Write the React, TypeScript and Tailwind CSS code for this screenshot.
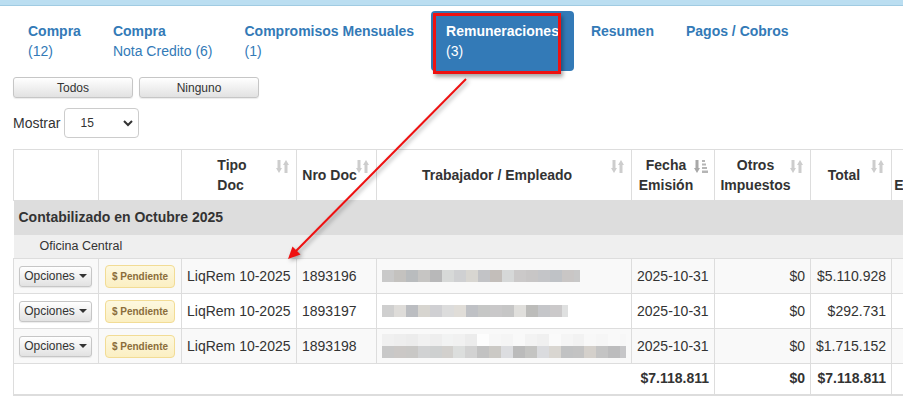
import React from 'react';

const tabs = [
  { title: 'Compra', sub: '(12)' },
  { title: 'Compra', sub: 'Nota Credito (6)' },
  { title: 'Compromisos Mensuales', sub: '(1)' },
  { title: 'Remuneraciones', sub: '(3)', active: true },
  { title: 'Resumen', sub: '' },
  { title: 'Pagos / Cobros', sub: '' },
];

// pixelated (blurred) names
const blur1 = ['#c9c9c9', '#c4c2bf', '#b9bcbe', '#c6c5c3', '#b8b8b9', '#d7d9d8', '#cfd0d2', '#d8d6d1', '#c2c3c6', '#c3beba', '#d6d8d8', '#cbc9c9', '#c8c6c6', '#c4c5c8', '#bfc2c6', '#c9c6c5', '#c8c8c8'];
const blur2 = ['#cfcfcf', '#dedcd9', '#bbbdc1', '#d7d5d0', '#d0d0d3', '#dcdcdc', '#e0ddd8', '#bfc1c5', '#c6c7c6', '#c9c8c9', '#c6c6c6', '#e0dfdc', '#bcbcba', '#c5c6c9', '#cbc9ca', '#dfe0e0'];
const blur3a = ['#f0f0f0', '#eeeeee', '#ececec', '#f1f1f1', '#eeeeee', '#f2f3f3', '#f1f1f1', '#ececec', '#fdfdfd', '#f7f7f7', '#f5f5f5', '#f9f9f9', '#f3f3f3', '#f0f0f0', '#fafafa', '#f5f5f5', '#f2f2f2', '#f8f8f8', '#f6f6f6', '#f9f9f9', '#f7f7f7'];
const blur3b = ['#c8c8c8', '#cbc8c6', '#c9c8c6', '#d1d2d3', '#ced0d0', '#d2d0cd', '#dcdedd', '#d2d2d2', '#c2c2c2', '#cbc9c5', '#dcdde0', '#bbbbbb', '#c4c4c2', '#dadbde', '#d9d6d1', '#c1c2c3', '#c3c3c3', '#d4d0cb', '#c4c4c4', '#bcbcbd', '#c6c6c8'];

const rows = [
  { nro: '1893196', total: '$5.110.928', blur: [blur1], striped: true },
  { nro: '1893197', total: '$292.731', blur: [blur2], striped: false },
  { nro: '1893198', total: '$1.715.152', blur: [blur3a, blur3b], striped: true },
];

function SortIcon({ active }: { active?: boolean }) {
  if (active) {
    return (
      <svg width="14" height="13" viewBox="0 0 14 13" className="absolute top-[10px] right-[6px]">
        <rect x="1.5" y="0" width="3" height="8" fill="#a8a8a8" />
        <polygon points="0,8 6,8 3,13" fill="#a8a8a8" />
        <rect x="8" y="0" width="3" height="2" fill="#b5b5b5" />
        <rect x="8" y="3.5" width="4" height="2" fill="#b5b5b5" />
        <rect x="8" y="7" width="5" height="2" fill="#b5b5b5" />
        <rect x="8" y="10.5" width="6" height="2.5" fill="#b5b5b5" />
      </svg>
    );
  }
  return (
    <svg width="13" height="13" viewBox="0 0 13 13" className="absolute top-[10px] right-[7px]">
      <rect x="1.5" y="0" width="3" height="8" fill="#cdcdcd" />
      <polygon points="0,8 6,8 3,13" fill="#cdcdcd" />
      <polygon points="7,5 13,5 10,0" fill="#cdcdcd" />
      <rect x="8.5" y="5" width="3" height="8" fill="#cdcdcd" />
    </svg>
  );
}

function Blocks({ colors }: { colors: string[] }) {
  return (
    <div className="flex h-[12px]">
      {colors.map((c, i) => (
        <div
          key={i}
          className={i === colors.length - 1 ? 'h-full w-[6px]' : 'h-full w-[12px]'}
          style={{ backgroundColor: c }}
        />
      ))}
    </div>
  );
}

const th = 'relative border border-[#ddd] pl-[5px] pr-[19px] py-[5px] text-center align-middle font-bold leading-5';
const td = 'border border-[#ddd] px-[5px] align-middle';

export default function App() {
  return (
    <div className="relative w-[903px] h-[414px] overflow-hidden bg-white font-['Liberation_Sans',Arial,sans-serif] text-[14px] text-[#333]">
      <div className="h-[6px] bg-[#bbdef1] border-b border-[#a0cbe2]" />

      <div className="pl-[13px] pt-[5px]">
        {/* Tabs */}
        <ul className="flex gap-[2px]">
          {tabs.map((t, i) => (
            <li
              key={i}
              className={
                t.active
                  ? 'px-[15px] py-[10px] leading-5 rounded bg-[#337ab7] text-white'
                  : 'px-[15px] py-[10px] leading-5 rounded text-[#337ab7]'
              }
            >
              <div className="font-bold whitespace-nowrap">{t.title}</div>
              <div className="whitespace-nowrap h-5">{t.sub}</div>
            </li>
          ))}
        </ul>

        <div className="flex gap-[6px] mt-[6px]">
          <button className="w-[120px] h-[21px] rounded-[3px] border border-[#c6c6c6] bg-gradient-to-b from-white to-[#e2e2e2] text-[12px] leading-none text-[#333] shadow-[0_1px_1px_rgba(0,0,0,0.08)]">
            Todos
          </button>
          <button className="w-[120px] h-[21px] rounded-[3px] border border-[#c6c6c6] bg-gradient-to-b from-white to-[#e2e2e2] text-[12px] leading-none text-[#333] shadow-[0_1px_1px_rgba(0,0,0,0.08)]">
            Ninguno
          </button>
        </div>

        <div className="flex items-center gap-[4px] mt-[10px]">
          <span>Mostrar</span>
          <div className="relative w-[75px] h-[30px]">
            <select className="w-full h-full appearance-none rounded border border-[#ccc] bg-white pl-[15px] text-[12px] text-[#333] outline-none">
              <option>15</option>
            </select>
            <svg width="10" height="7" viewBox="0 0 10 7" className="absolute right-[6px] top-[12px] pointer-events-none">
              <polyline points="1,1 5,5 9,1" fill="none" stroke="#333" strokeWidth="2" />
            </svg>
          </div>
        </div>

        {/* Table */}
        <table className="mt-[11px] table-fixed border-collapse w-[951px]">
          <colgroup>
            <col className="w-[85px]" />
            <col className="w-[83px]" />
            <col className="w-[115px]" />
            <col className="w-[80px]" />
            <col className="w-[255px]" />
            <col className="w-[83px]" />
            <col className="w-[96px]" />
            <col className="w-[81px]" />
            <col className="w-[73px]" />
          </colgroup>
          <thead>
            <tr className="h-[51px]">
              <th className="border border-[#ddd]" />
              <th className="border border-[#ddd]" />
              <th className={th}>
                <span className="inline-block text-left">Tipo<br />Doc</span>
                <SortIcon />
              </th>
              <th className={th}>
                Nro Doc
                <SortIcon />
              </th>
              <th className={th}>
                Trabajador / Empleado
                <SortIcon />
              </th>
              <th className={th}>
                Fecha<br />Emisión
                <SortIcon active />
              </th>
              <th className={th}>
                Otros<br />Impuestos
                <SortIcon />
              </th>
              <th className={th}>
                Total
                <SortIcon />
              </th>
              <th className="border border-[#ddd] px-[2px] py-[5px] text-center align-middle font-bold leading-5 whitespace-nowrap">
                Doc<br />Estado SII
              </th>
            </tr>
          </thead>
          <tbody>
            <tr className="h-[34px] bg-[#ddd]">
              <td colSpan={9} className="px-[5px] font-bold">Contabilizado en Octubre 2025</td>
            </tr>
            <tr className="h-[24px] bg-[#efefef]">
              <td colSpan={9} className="pl-[26px] text-[12.5px]">Oficina Central</td>
            </tr>
            {rows.map((r, i) => (
              <tr key={i} className={r.striped ? 'h-[35px] bg-[#f9f9f9]' : 'h-[35px] bg-white'}>
                <td className={td}>
                  <button className="flex items-center justify-center gap-[4px] w-[73px] h-[21px] rounded-[3px] border border-[#c6c6c6] bg-gradient-to-b from-white to-[#e2e2e2] text-[12px] text-[#333] shadow-[0_1px_1px_rgba(0,0,0,0.08)]">
                    Opciones
                    <span className="w-0 h-0 border-l-[4px] border-r-[4px] border-t-[4px] border-l-transparent border-r-transparent border-t-[#333]" />
                  </button>
                </td>
                <td className={td + ' text-center'}>
                  <span className="inline-block h-[23px] leading-[21px] px-[6px] rounded border border-[#f2dc95] bg-gradient-to-b from-[#fdf8e0] to-[#fbefc2] text-[10px] font-bold text-[#8a6d3b] whitespace-nowrap">
                    $ Pendiente
                  </span>
                </td>
                <td className={td + ' whitespace-nowrap'}>LiqRem 10-2025</td>
                <td className={td}>{r.nro}</td>
                <td className={td}>
                  <div className="flex flex-col">
                    {r.blur.map((b, j) => (
                      <Blocks key={j} colors={b} />
                    ))}
                  </div>
                </td>
                <td className={td + ' whitespace-nowrap'}>2025-10-31</td>
                <td className={td + ' text-right'}>$0</td>
                <td className={td + ' text-right whitespace-nowrap'}>{r.total}</td>
                <td className={td} />
              </tr>
            ))}
          </tbody>
          <tfoot>
            <tr className="h-[31px] bg-white">
              <td colSpan={6} className={td + ' text-right font-bold border-b-2'}>$7.118.811</td>
              <td className={td + ' text-right font-bold border-b-2'}>$0</td>
              <td className={td + ' text-right font-bold border-b-2'}>$7.118.811</td>
              <td className={td + ' border-b-2'} />
            </tr>
          </tfoot>
        </table>
      </div>

      {/* annotation: red box and arrow */}
      <div className="absolute left-[433px] top-[13px] w-[128px] h-[61px] border-[3px] border-[#ee1111] shadow-[2px_3px_4px_rgba(0,0,0,0.35)]" />
      <svg
        width="903"
        height="414"
        viewBox="0 0 903 414"
        className="absolute left-0 top-0 pointer-events-none drop-shadow-[2px_2px_2px_rgba(0,0,0,0.35)]"
      >
        <line x1="466" y1="79" x2="295" y2="252" stroke="#ee1111" strokeWidth="2" />
        <polygon points="288,259 300.5,254.5 292.5,246.5" fill="#ee1111" />
      </svg>
    </div>
  );
}
